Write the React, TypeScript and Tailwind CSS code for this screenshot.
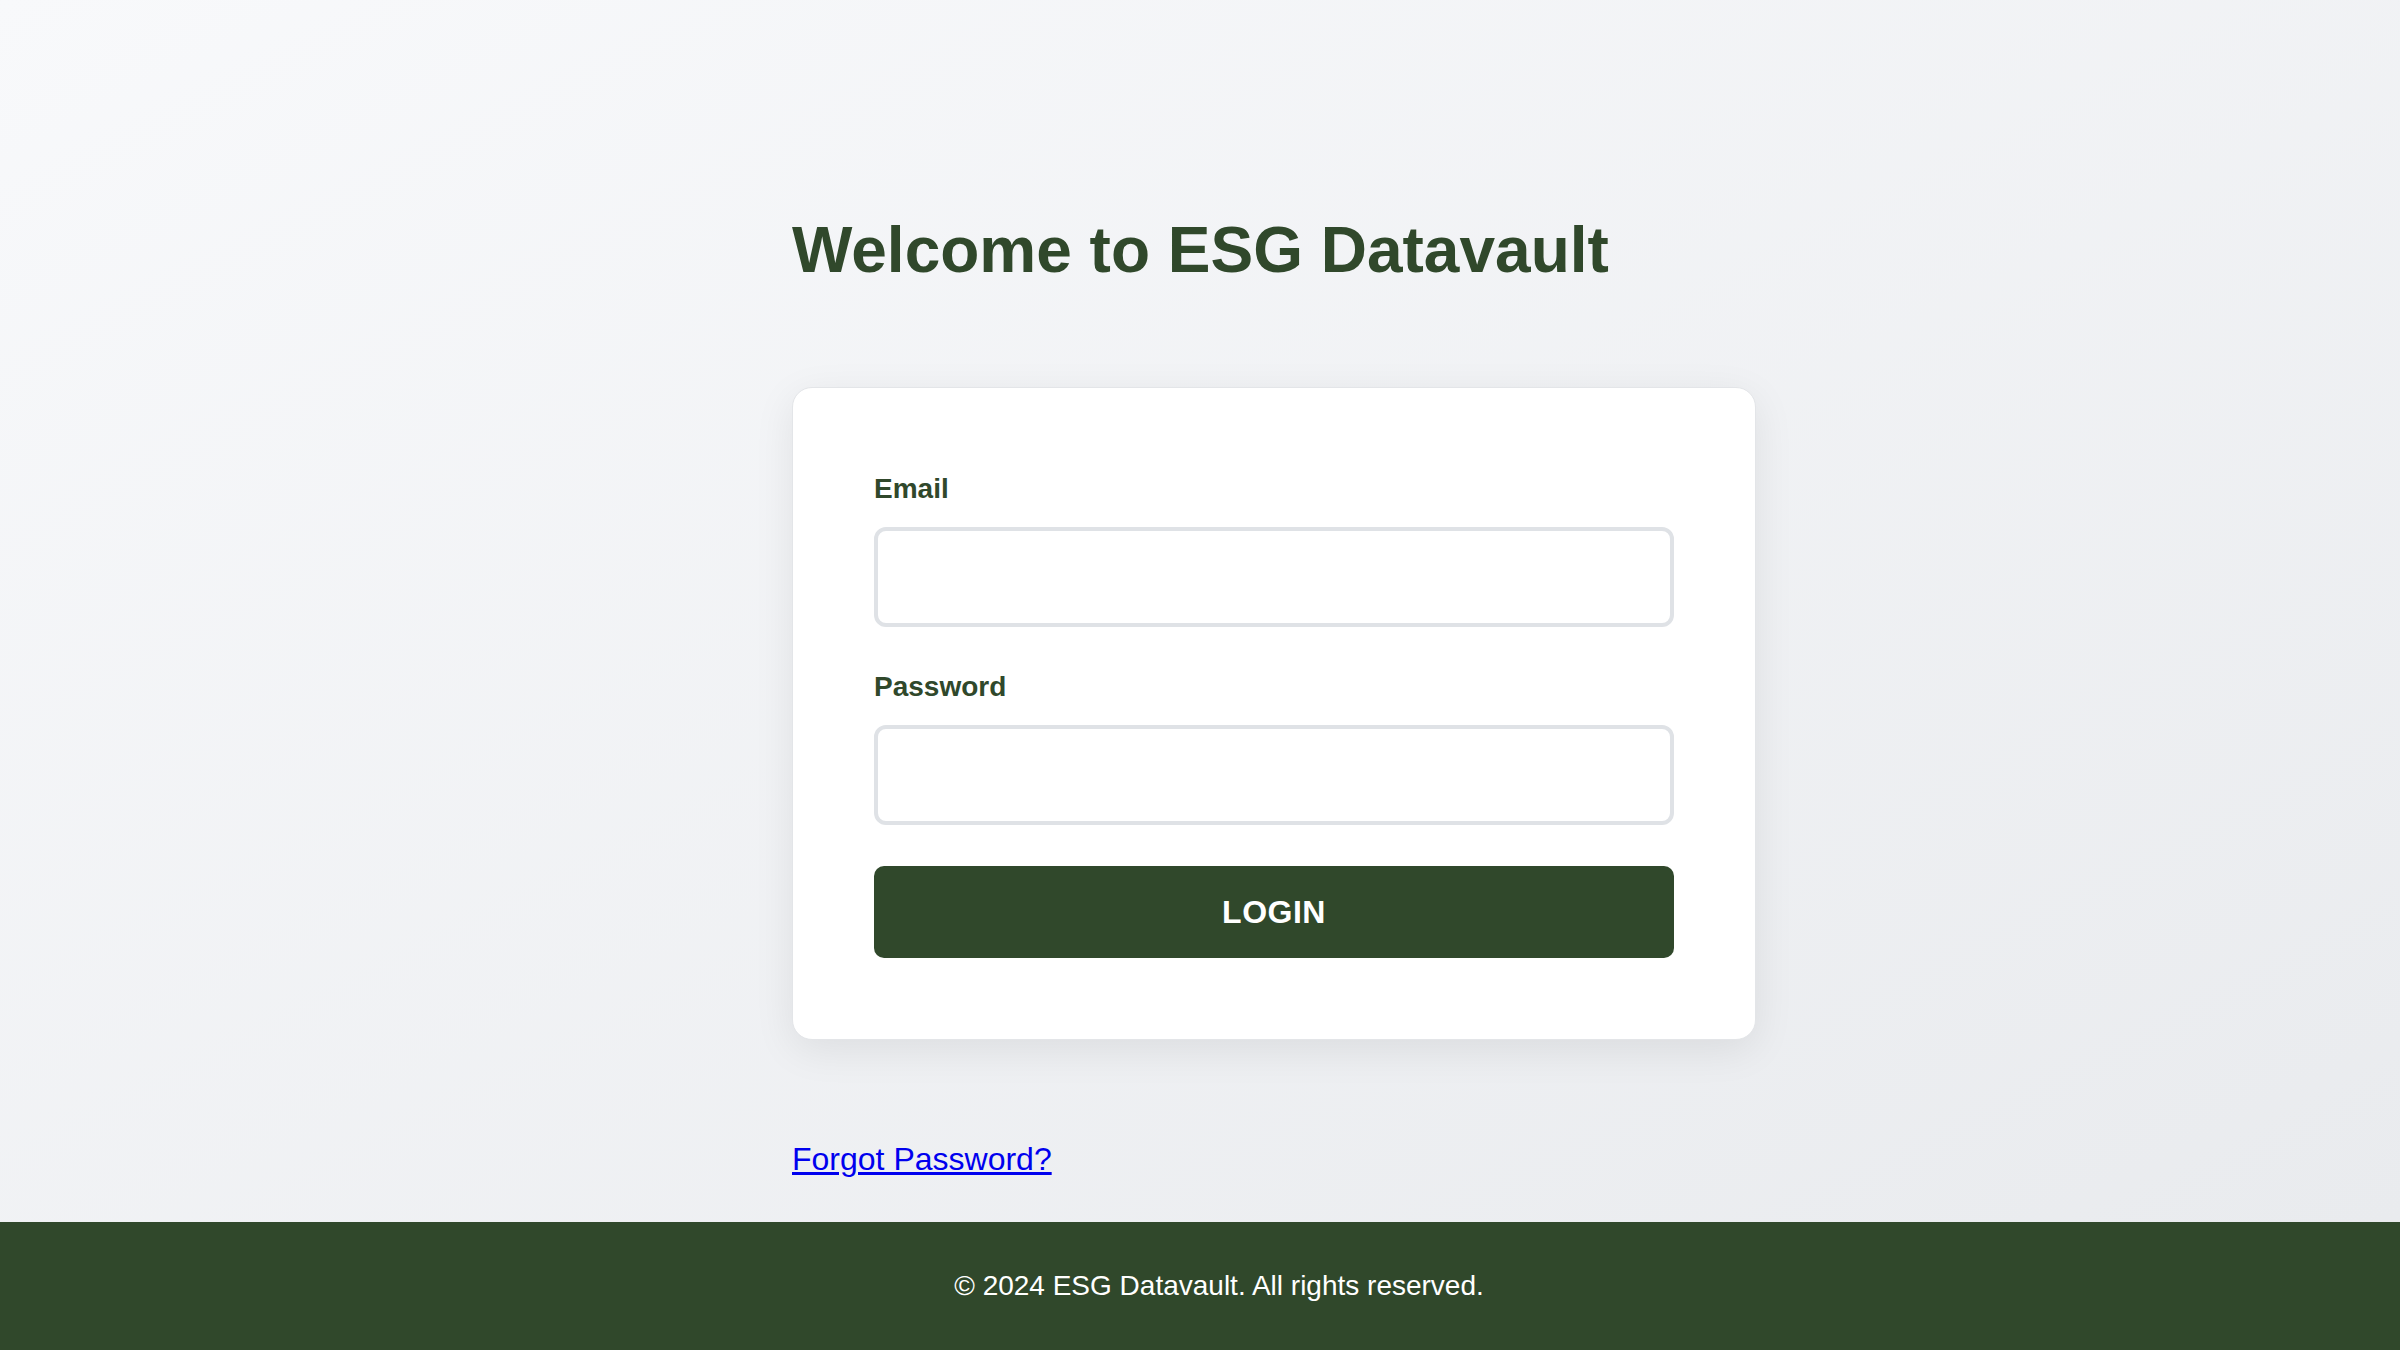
import React from "react";

export default function App() {
  return (
    <div className="min-h-screen w-full font-['Liberation_Sans',Arial,sans-serif]">
      <main className="h-[1222px] bg-linear-to-br from-[#f8f9fb] to-[#e9ebee] pl-[792px] pt-[213px]">
        <h1 className="text-[64px] leading-[74px] font-bold text-[#30482b] mb-[100px]">
          Welcome to ESG Datavault
        </h1>

        <div className="w-[964px] bg-white border border-[#e3e5e8] rounded-[20px] shadow-[0_10px_40px_rgba(0,0,0,0.08)] p-[81px]">
          <form onSubmit={(e) => e.preventDefault()}>
            <label className="block text-[28px] leading-[40px] font-bold text-[#30482b] mb-[18px]">Email</label>
            <input
              type="email"
              className="block w-full h-[100px] border-[4px] border-[#dfe2e6] rounded-[12px] bg-white outline-none mb-[40px] px-5 text-[28px]"
            />
            <label className="block text-[28px] leading-[40px] font-bold text-[#30482b] mb-[18px]">Password</label>
            <input
              type="password"
              className="block w-full h-[100px] border-[4px] border-[#dfe2e6] rounded-[12px] bg-white outline-none mb-[41px] px-5 text-[28px]"
            />
            <button
              type="submit"
              className="block w-full h-[92px] bg-[#30482b] text-white rounded-[10px] text-[32px] font-bold tracking-[0.5px]"
            >
              LOGIN
            </button>
          </form>
        </div>

        <a href="#" className="inline-block mt-[95px] text-[32px] text-[#0000ee] underline">
          Forgot Password?
        </a>
      </main>

      <footer className="h-[128px] bg-[#30482b] py-12 pl-[38px] text-center text-white text-[28px] leading-[32px]">
        © 2024 ESG Datavault. All rights reserved.
      </footer>
    </div>
  );
}
